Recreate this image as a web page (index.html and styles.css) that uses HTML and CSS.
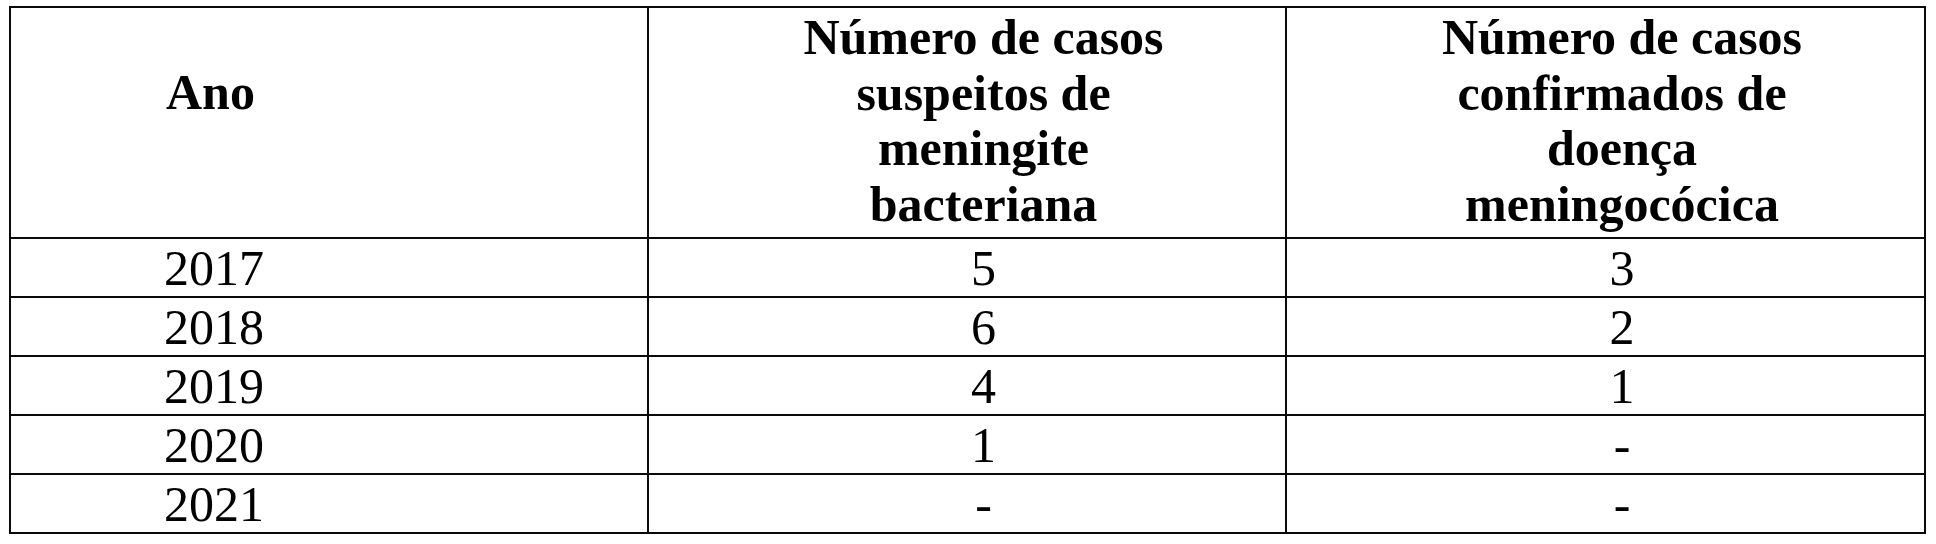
FILE: index.html
```html
<!DOCTYPE html>
<html lang="pt">
<head>
<meta charset="utf-8">
<title>Casos de meningite</title>
<link rel="stylesheet" href="styles.css">
</head>
<body>
<table class="cases">
  <colgroup>
    <col class="c1"><col class="c2"><col class="c3">
  </colgroup>
  <thead>
    <tr>
      <th class="year-head">Ano</th>
      <th class="num">Número de casos<br>suspeitos de<br>meningite<br>bacteriana</th>
      <th class="num">Número de casos<br>confirmados de<br>doença<br>meningocócica</th>
    </tr>
  </thead>
  <tbody>
    <tr><td class="year">2017</td><td class="num">5</td><td class="num">3</td></tr>
    <tr><td class="year">2018</td><td class="num">6</td><td class="num">2</td></tr>
    <tr><td class="year">2019</td><td class="num">4</td><td class="num">1</td></tr>
    <tr><td class="year">2020</td><td class="num">1</td><td class="num">-</td></tr>
    <tr><td class="year">2021</td><td class="num">-</td><td class="num">-</td></tr>
  </tbody>
</table>
</body>
</html>
```
FILE: styles.css
```css
html, body {
  margin: 0;
  padding: 0;
  background: #ffffff;
}

body {
  font-family: "Liberation Serif", "Times New Roman", serif;
  color: #000000;
}

.cases {
  border-collapse: collapse;
  table-layout: fixed;
  width: 1915px;
  margin: 6px 0 0 9px;
  font-size: 50px;
}

.cases col.c1 { width: 638px; }
.cases col.c2 { width: 638px; }
.cases col.c3 { width: 639px; }

.cases th,
.cases td {
  border: 2px solid #0a0a0a;
  padding: 0;
}

.cases th {
  font-weight: bold;
  line-height: 55.7px;
  padding-top: 2px;
  padding-bottom: 4px;
  vertical-align: top;
}

.cases th.year-head {
  text-align: left;
  padding-left: 155px;
  padding-top: 57px;
}

.cases td {
  line-height: 55px;
  padding-top: 2px;
  height: 55px;
}

.cases td.year {
  text-align: left;
  padding-left: 153px;
}

.cases .num {
  text-align: center;
  padding-left: 33px;
  padding-right: 0;
}
```
